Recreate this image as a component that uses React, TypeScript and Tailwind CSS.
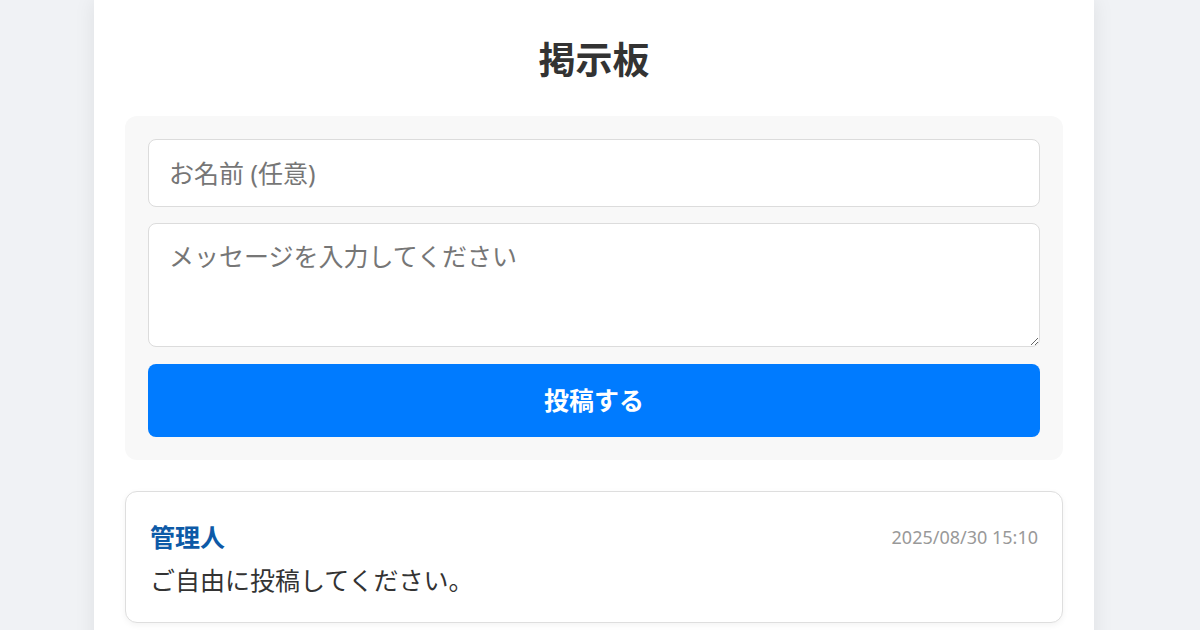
import { useState } from "react";

type Post = { name: string; date: string; message: string };

const posts: Post[] = [
  { name: "管理人", date: "2025/08/30 15:10", message: "ご自由に投稿してください。" },
];

export default function App() {
  const [name, setName] = useState("");
  const [message, setMessage] = useState("");

  return (
    <div className="min-h-[630px] bg-[#f0f2f5] pr-3 font-['Noto_Sans','Noto_Sans_CJK_JP',sans-serif] text-[#333]">
      <div className="mx-auto min-h-[630px] w-[1000px] bg-white px-[31px] pt-9 pb-8 shadow-[0_0_20px_rgba(0,0,0,0.08)]">
        <h1 className="mb-8 text-center text-[37px] leading-[48px] font-bold text-[#333]">掲示板</h1>

        <form
          className="flex flex-col rounded-xl bg-[#f8f8f8] p-[23px]"
          onSubmit={(e) => e.preventDefault()}
        >
          <input
            className="h-[68px] rounded-lg border border-[#dcdcdc] bg-white px-5 text-[25px] text-[#333] outline-none placeholder:text-[#767676]"
            placeholder="お名前 (任意)"
            value={name}
            onChange={(e) => setName(e.target.value)}
          />
          <textarea
            className="mt-4 h-[124px] rounded-lg border border-[#dcdcdc] bg-white px-5 py-[14px] text-[25px] leading-[36px] text-[#333] outline-none placeholder:text-[#767676]"
            placeholder="メッセージを入力してください"
            value={message}
            onChange={(e) => setMessage(e.target.value)}
          />
          <button
            type="submit"
            className="mt-[17px] h-[73px] rounded-lg bg-[#007bff] text-[25px] font-bold text-white"
          >
            投稿する
          </button>
        </form>

        <div className="mt-[31px] flex flex-col gap-4">
          {posts.map((p) => (
            <div
              key={p.date}
              className="rounded-xl border border-[#dedede] bg-white px-6 pt-[27px] pb-[24px] shadow-[0_2px_6px_rgba(0,0,0,0.05)]"
            >
              <div className="flex items-center justify-between">
                <span className="text-[25px] leading-[36px] font-bold text-[#0d5aa7]">{p.name}</span>
                <span className="text-[18px] text-[#999]">{p.date}</span>
              </div>
              <p className="mt-[7px] text-[25px] leading-[36px] text-[#333]">{p.message}</p>
            </div>
          ))}
        </div>
      </div>
    </div>
  );
}
